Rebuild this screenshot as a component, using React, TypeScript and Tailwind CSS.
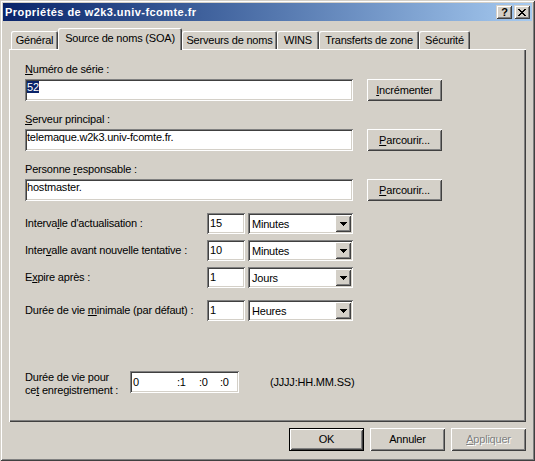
import React from "react";

const raised =
  "shadow-[inset_1px_1px_0_#ffffff,inset_-1px_-1px_0_#404040,inset_2px_2px_0_#d4d0c8,inset_-2px_-2px_0_#808080]";
const sunken =
  "shadow-[inset_1px_1px_0_#808080,inset_-1px_-1px_0_#ffffff,inset_2px_2px_0_#404040,inset_-2px_-2px_0_#d4d0c8]";
const captionBtn =
  "shadow-[inset_1px_1px_0_#d4d0c8,inset_-1px_-1px_0_#404040,inset_2px_2px_0_#ffffff,inset_-2px_-2px_0_#808080]";
const tabShadow =
  "shadow-[inset_1px_1px_0_#ffffff,inset_-1px_0_0_#404040,inset_-2px_0_0_#808080]";

function U({ children }: { children: React.ReactNode }) {
  return <span className="underline decoration-1 underline-offset-[1px]">{children}</span>;
}

function Arrow() {
  return (
    <svg width="7" height="4" viewBox="0 0 7 4" shapeRendering="crispEdges">
      <path d="M0 0h7v1H0zM1 1h5v1H1zM2 2h3v1H2zM3 3h1v1H3z" fill="#000" />
    </svg>
  );
}

function CloseGlyph() {
  return (
    <svg width="8" height="7" viewBox="0 0 8 7" shapeRendering="crispEdges">
      <path
        d="M0 0h2v1H0zM6 0h2v1H6zM1 1h2v1H1zM5 1h2v1H5zM2 2h4v1H2zM3 3h2v1H3zM2 4h4v1H2zM1 5h2v1H1zM5 5h2v1H5zM0 6h2v1H0zM6 6h2v1H6z"
        fill="#000"
      />
    </svg>
  );
}

function Button({ children, className = "" }: { children: React.ReactNode; className?: string }) {
  return (
    <div
      className={`w-[75px] h-[22px] bg-[#d4d0c8] ${raised} flex items-center justify-center ${className}`}
    >
      {children}
    </div>
  );
}

function Combo({ value }: { value: string }) {
  return (
    <div className={`ml-[3px] w-[105px] h-[21px] bg-white ${sunken} p-[2px] flex`}>
      <div className="flex-1 pl-[2px] pt-[2px] flex items-center">{value}</div>
      <div className={`w-[16px] h-full bg-[#d4d0c8] ${raised} flex items-center justify-center pt-[1px]`}>
        <Arrow />
      </div>
    </div>
  );
}

function IntervalRow({
  label,
  num,
  unit,
  className = "",
}: {
  label: React.ReactNode;
  num: string;
  unit: string;
  className?: string;
}) {
  return (
    <div className={`flex items-center h-[21px] ${className}`}>
      <div className="w-[182px]">{label}</div>
      <div className={`w-[38px] h-[21px] bg-white ${sunken} pl-[3px] flex items-center`}>{num}</div>
      <Combo value={unit} />
    </div>
  );
}

const tabs = [
  { label: "Général", w: "w-[47px]" },
  { label: "Source de noms (SOA)", w: "w-[124px]", active: true },
  { label: "Serveurs de noms", w: "w-[95px]" },
  { label: "WINS", w: "w-[42px]" },
  { label: "Transferts de zone", w: "w-[100px]" },
  { label: "Sécurité", w: "w-[51px]" },
];

export default function App() {
  return (
    <div className="w-[535px] h-[461px] bg-[#d4d0c8] p-[3px] flex flex-col shadow-[inset_1px_1px_0_#d4d0c8,inset_-1px_-1px_0_#404040,inset_2px_2px_0_#ffffff,inset_-2px_-2px_0_#808080] font-['Liberation_Sans',Arial,sans-serif] text-[11px] leading-[13px] tracking-[-0.2px] text-black overflow-hidden select-none">
      {/* Title bar */}
      <div className="h-[18px] flex items-center justify-between bg-gradient-to-r from-[#0a246a] to-[#a6caf0] pl-[2px] pr-[2px]">
        <span className="text-white font-bold tracking-[0.45px]">Propriétés de w2k3.univ-fcomte.fr</span>
        <div className="flex gap-[2px]">
          <div className={`w-[16px] h-[14px] bg-[#d4d0c8] ${captionBtn} flex items-center justify-center font-bold text-[11px] leading-[11px] tracking-normal pl-[1px]`}>
            ?
          </div>
          <div className={`w-[16px] h-[14px] bg-[#d4d0c8] ${captionBtn} flex items-center justify-center`}>
            <CloseGlyph />
          </div>
        </div>
      </div>

      <div className="px-[6px] flex flex-col">
        {/* Tabs */}
        <div className="mt-[7px] h-[21px] flex items-end pl-[2px]">
          {tabs.map((t) =>
            t.active ? (
              <div
                key={t.label}
                className={`${t.w} h-[22px] -mb-[1px] relative z-10 bg-[#d4d0c8] rounded-t-[2px] ${tabShadow} flex justify-center pt-[4px]`}
              >
                {t.label}
              </div>
            ) : (
              <div
                key={t.label}
                className={`${t.w} h-[18px] bg-[#d4d0c8] rounded-t-[2px] ${tabShadow} flex justify-center pt-[3px]`}
              >
                {t.label}
              </div>
            )
          )}
        </div>

        {/* Panel */}
        <div className="h-[373px] bg-[#d4d0c8] shadow-[inset_1px_1px_0_#ffffff,inset_-1px_-1px_0_#404040,inset_-2px_-2px_0_#808080] pl-[16px] pt-[14px] flex flex-col">
          <div>
            <U>N</U>uméro de série :
          </div>
          <div className="mt-[3px] flex items-start">
            <div className={`w-[328px] h-[22px] bg-white ${sunken} pl-[2px] pt-[2px]`}>
              <span className="bg-[#0a246a] text-white">52</span>
            </div>
            <Button className="ml-[14px]">
              <span>
                <U>I</U>ncrémenter
              </span>
            </Button>
          </div>

          <div className="mt-[12px]">
            <U>S</U>erveur principal :
          </div>
          <div className="mt-[3px] flex items-start">
            <div className={`w-[328px] h-[22px] bg-white ${sunken} pl-[2px] pt-[2px]`}>telemaque.w2k3.univ-fcomte.fr.</div>
            <Button className="ml-[14px]">
              <span>
                <U>P</U>arcourir...
              </span>
            </Button>
          </div>

          <div className="mt-[12px]">
            Personne <U>r</U>esponsable :
          </div>
          <div className="mt-[3px] flex items-start">
            <div className={`w-[328px] h-[22px] bg-white ${sunken} pl-[2px] pt-[2px]`}>hostmaster.</div>
            <Button className="ml-[14px]">
              <span>
                <U>P</U>arcourir...
              </span>
            </Button>
          </div>

          <IntervalRow
            className="mt-[12px]"
            label={
              <>
                Interva<U>l</U>le d'actualisation :
              </>
            }
            num="15"
            unit="Minutes"
          />
          <IntervalRow
            className="mt-[6px]"
            label={
              <>
                Inter<U>v</U>alle avant nouvelle tentative :
              </>
            }
            num="10"
            unit="Minutes"
          />
          <IntervalRow
            className="mt-[6px]"
            label={
              <>
                E<U>x</U>pire après :
              </>
            }
            num="1"
            unit="Jours"
          />
          <IntervalRow
            className="mt-[12px]"
            label={
              <>
                Durée de vie <U>m</U>inimale (par défaut) :
              </>
            }
            num="1"
            unit="Heures"
          />

          <div className="mt-[50px] flex items-start">
            <div className="w-[105px]">
              Durée de vie pour
              <br />
              ce<U>t</U> enregistrement :
            </div>
            <div className={`w-[109px] h-[22px] bg-white ${sunken} pl-[3px] flex items-center`}>
              <span className="w-[44px]">0</span>
              <span className="w-[22px]">:1</span>
              <span className="w-[21px]">:0</span>
              <span>:0</span>
            </div>
            <div className="ml-[31px] mt-[5px]">(JJJJ:HH.MM.SS)</div>
          </div>
        </div>

        {/* Bottom buttons */}
        <div className="mt-[6px] flex justify-end gap-[6px]">
          <div className={`w-[75px] h-[23px] border border-black bg-[#d4d0c8] ${raised} flex items-center justify-center`}>
            OK
          </div>
          <div className={`w-[75px] h-[23px] bg-[#d4d0c8] ${raised} flex items-center justify-center`}>Annuler</div>
          <div
            className={`w-[75px] h-[23px] bg-[#d4d0c8] ${raised} flex items-center justify-center text-[#808080] [text-shadow:1px_1px_0_#ffffff]`}
          >
            <span>
              <U>A</U>ppliquer
            </span>
          </div>
        </div>
      </div>
    </div>
  );
}
